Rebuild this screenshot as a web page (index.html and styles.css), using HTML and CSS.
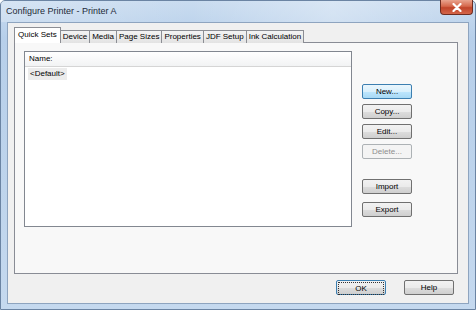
FILE: index.html
```html
<!DOCTYPE html>
<html>
<head>
  <title>Configure Printer - Printer A</title>
  <link rel="stylesheet" href="styles.css">
</head>
<body>

  <div class="window">
    <div class="titlebar">
      <span class="title">Configure Printer - Printer A</span>
      <button class="close">
        <svg width="10" height="9" viewBox="0 0 10 9">
          <path d="M1.5 1 L8.5 8 M8.5 1 L1.5 8" stroke="#fff" stroke-width="2.2" stroke-linecap="round"/>
        </svg>
      </button>
    </div>

    <div class="client">
      <!-- TABS -->
      <div class="tabs">
        <div class="tab active">Quick Sets</div>
        <div class="tab">Device</div>
        <div class="tab">Media</div>
        <div class="tab">Page Sizes</div>
        <div class="tab">Properties</div>
        <div class="tab">JDF Setup</div>
        <div class="tab">Ink Calculation</div>
      </div>

      <div class="panel">
        <div class="list">
          <div class="list-head">Name:</div>
          <div class="list-item">&lt;Default&gt;</div>
        </div>

        <div class="side">
          <button class="btn default">New...</button>
          <button class="btn">Copy...</button>
          <button class="btn">Edit...</button>
          <button class="btn" disabled>Delete...</button>
          <button class="btn gap">Import</button>
          <button class="btn">Export</button>
        </div>
      </div>

      <!-- DIALOG BUTTONS -->
      <div class="footer">
        <button class="btn wide focus"><span>OK</span></button>
        <button class="btn wide">Help</button>
      </div>
    </div>
  </div>

</body>
</html>
```

FILE: styles.css
```css
html, body {
  margin: 0;
  padding: 0;
}
body {
  font-family: "Liberation Sans", Arial, sans-serif;
  font-size: 8px;
  color: #000;
  background: #fff;
}
.window {
  width: 476px;
  height: 310px;
  box-sizing: border-box;
  border: 1px solid #6b84a3;
  border-radius: 5px 5px 0 0;
  background: linear-gradient(180deg, #c9dcf0 0%, #b7cfea 12%, #bed4ec 60%, #c5d9ef 100%);
  display: flex;
  flex-direction: column;
}
.titlebar {
  height: 21px;
  display: flex;
  align-items: flex-start;
  justify-content: space-between;
  padding-left: 5px;
  background: linear-gradient(90deg, rgba(255,255,255,0.25), rgba(255,255,255,0) 40%, rgba(255,255,255,0.3) 70%, rgba(255,255,255,0));
}
.title {
  font-size: 9px;
  margin-top: 5px;
  color: #1e2a38;
}
.close {
  width: 33px;
  height: 15px;
  margin-right: 2px;
  margin-top: -1px;
  padding: 0;
  border: 1px solid #6e2c20;
  border-top: none;
  border-radius: 0 0 4px 4px;
  background: linear-gradient(180deg, #e9a48f 0%, #d5674b 45%, #c0442a 55%, #d4664a 100%);
  display: flex;
  align-items: center;
  justify-content: center;
}
.client {
  flex: 1;
  margin: 0 6px 5px 6px;
  border: 1px solid #8ea4bf;
  background: #f0f0f0;
  display: flex;
  flex-direction: column;
  padding: 5px 10px 0 6px;
}
.tabs {
  display: flex;
  height: 15px;
  padding-left: 1px;
  align-items: flex-end;
  position: relative;
  z-index: 1;
}
.tab {
  height: 12px;
  line-height: 12px;
  padding: 0 2px;
  border: 1px solid #8c8e94;
  border-bottom: none;
  margin-right: -1px;
  background: linear-gradient(180deg, #f3f3f3, #e3e3e3);
  white-space: nowrap;
}
.tab.active {
  height: 15px;
  line-height: 14px;
  padding: 0 3px;
  margin-left: -1px;
  margin-right: -1px;
  background: #fff;
  position: relative;
  z-index: 2;
}
.panel {
  height: 232px;
  box-sizing: border-box;
  border: 1px solid #898c95;
  margin-top: -1px;
  padding: 8px 9px;
  display: flex;
  background: #f8f8f8;
}
.list {
  width: 328px;
  height: 176px;
  box-sizing: border-box;
  border: 1px solid #828790;
  background: #fff;
}
.list-head {
  height: 14px;
  line-height: 14px;
  padding-left: 4px;
  border-bottom: 1px solid #d5d5d5;
  background: linear-gradient(180deg, #ffffff, #f2f3f4);
}
.list-item {
  display: inline-block;
  margin: 1px 0 0 3px;
  padding: 0 2px;
  height: 12px;
  line-height: 12px;
  background: #ececec;
}
.side {
  display: flex;
  flex-direction: column;
  margin-left: 10px;
  padding-top: 33px;
  gap: 5px;
}
.btn {
  width: 50px;
  height: 15px;
  padding: 0;
  font-family: inherit;
  font-size: 8px;
  color: #000;
  border: 1px solid #707070;
  border-radius: 2px;
  background: linear-gradient(180deg, #f2f2f2 0%, #ebebeb 50%, #dddddd 51%, #cfcfcf 100%);
}
.btn.default {
  border-color: #3c7fb1;
  background: linear-gradient(180deg, #eaf6fd 0%, #d9f0fc 50%, #bee6fd 51%, #a7d9f5 100%);
}
.btn:disabled {
  color: #8d8d8d;
  border-color: #adb2b5;
  background: #f4f4f4;
}
.btn.gap {
  margin-top: 15px;
  margin-bottom: 3px;
}
.footer {
  display: flex;
  justify-content: flex-end;
  gap: 18px;
  padding: 6px 4px 0 0;
}
.btn.focus {
  border-color: #3c7fb1;
  padding: 1px;
}
.btn.focus span {
  display: block;
  height: 11px;
  line-height: 11px;
  border: 1px dotted #333;
}
```
